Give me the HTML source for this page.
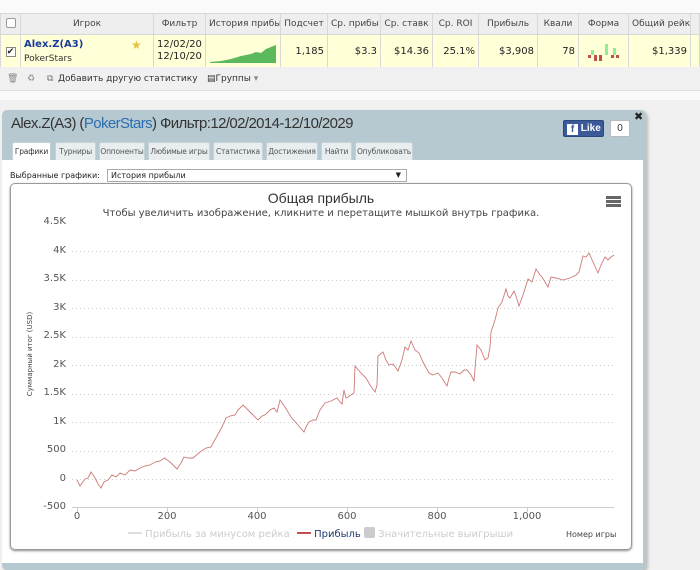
<!DOCTYPE html>
<html><head><meta charset="utf-8"><style>
*{box-sizing:border-box;margin:0;padding:0}
body{width:700px;height:563px;background:#f1f1f1;font-family:"Liberation Sans","DejaVu Sans",sans-serif;position:relative;overflow:hidden;font-size:10px;color:#333}
.a{position:absolute}
table{border-collapse:collapse;position:absolute;left:0;top:13px;width:700px;font-family:"DejaVu Sans",sans-serif;font-size:9px;table-layout:fixed}
td{border:1px solid #d8d8d8;white-space:nowrap;overflow:hidden;padding:0 3px}
tr.h td{background:#eeeeee;height:21px;text-align:center;color:#444}
tr.d td{background:#ffffd8;height:32px;text-align:right;color:#222;font-size:10px}
.tab{position:absolute;top:142px;height:18px;background:#e8eef0;border:1px solid #c5d2d8;border-bottom:none;font-size:7.5px;color:#555;text-align:center;line-height:17px;font-family:"DejaVu Sans",sans-serif;border-radius:2px 2px 0 0;white-space:nowrap;overflow:hidden;letter-spacing:-0.2px}
.yl{position:absolute;left:30px;width:36px;text-align:right;font-size:10px;color:#555;font-family:"DejaVu Sans",sans-serif}
.xl{position:absolute;top:511px;font-size:10px;color:#555;font-family:"DejaVu Sans",sans-serif;width:40px;text-align:center}
</style></head><body>
<div class="a" style="left:0;top:0;width:700px;height:100px;background:#fafafa"></div>
<table>
<tr class="h"><td style="width:20px"><span style="display:inline-block;width:10px;height:10px;border:1px solid #999;background:#fff;border-radius:2px"></span></td><td style="width:133px">Игрок</td><td style="width:52px">Фильтр</td><td style="width:75px">История прибы</td><td style="width:47px">Подсчет</td><td style="width:53px">Ср. прибы</td><td style="width:52px">Ср. ставк</td><td style="width:46px">Ср. ROI</td><td style="width:59px">Прибыль</td><td style="width:41px">Квали</td><td style="width:50px">Форма</td><td style="width:62px">Общий рейк</td><td></td></tr>
<tr class="d"><td style="text-align:center"><span style="display:inline-block;width:10px;height:10px;border:1px solid #888;background:#fff;font-size:9px;line-height:8px">✔</span></td>
<td style="text-align:left;position:relative"><div style="color:#1a3c9a;font-weight:bold;font-size:10px">Alex.Z(A3)</div><div style="color:#333;font-size:9px;margin-top:4px">PokerStars</div><span class="a" style="left:110px;top:3px;color:#e8c040;font-size:12px">★</span></td>
<td style="text-align:left;font-size:10px;line-height:12px">12/02/20<br>12/10/20</td>
<td style="padding:0;position:relative"><svg width="75" height="32" style="display:block"><path d="M4 27 L15 26 L25 24 L35 21 L45 19 L50 17 L55 18 L60 14 L65 12 L70 10 L70 28 L4 28Z" fill="#5cb85c"/></svg></td>
<td>1,185</td><td>$3.3</td><td>$14.36</td><td>25.1%</td><td>$3,908</td><td>78</td>
<td style="padding:0"><svg width="50" height="32" style="display:block"><g fill="#c0504d"><rect x="9" y="20" width="3" height="3"/><rect x="15" y="20" width="3" height="6"/><rect x="20" y="20" width="3" height="6"/><rect x="32" y="20" width="3" height="3"/><rect x="37" y="20" width="3" height="3"/></g><g fill="#90ee90"><rect x="12" y="15" width="3" height="5"/><rect x="26" y="9" width="3" height="11"/><rect x="34" y="13" width="3" height="7"/></g></svg></td>
<td>$1,339</td><td></td></tr>
</table>
<div class="a" style="left:0;top:67px;width:700px;height:24px;background:#f0f0f0;border-bottom:1px solid #ddd;font-family:'DejaVu Sans',sans-serif;font-size:9px;color:#333;line-height:24px">
<span class="a" style="left:7px;color:#888">🗑</span><span class="a" style="left:27px;color:#999">♻</span><span class="a" style="left:47px;color:#777">⧉</span><span class="a" style="left:58px">Добавить другую статистику</span><span class="a" style="left:207px">▤Группы <span style="color:#888">▾</span></span></div>
<div class="a" style="left:2px;top:110px;width:644px;height:460px;background:#b7c9d0;border-radius:5px;box-shadow:2px 2px 3px #bbb"></div>
<div class="a" style="left:11px;top:115px;font-size:15px;color:#333;font-family:'Liberation Sans',sans-serif;letter-spacing:-0.6px">Alex.Z(A3) (<span style="color:#2a6db0">PokerStars</span>) Фильтр:12/02/2014-12/10/2029</div>
<div class="a" style="left:563px;top:120px;width:41px;height:17px;background:#3b5998;border:1px solid #29487d;border-radius:2px;color:#fff;font-weight:bold;font-size:10px;line-height:15px;padding-left:3px"><span style="display:inline-block;width:11px;height:11px;background:#fff;color:#3b5998;text-align:center;line-height:12px;font-size:10px;vertical-align:-1px">f</span> Like</div>
<div class="a" style="left:610px;top:120px;width:20px;height:17px;background:#fff;border:1px solid #bbb;border-radius:2px;font-size:10px;text-align:center;line-height:15px;color:#333">0</div>
<div class="a" style="left:634px;top:110px;font-size:11px;font-weight:bold;color:#222">✖</div>
<div class="tab" style="left:12px;width:39px;background:#fff;height:19px;color:#333">Графики</div>
<div class="tab" style="left:55px;width:41px">Турниры</div>
<div class="tab" style="left:99px;width:46px">Оппоненты</div>
<div class="tab" style="left:148px;width:62px">Любимые игры</div>
<div class="tab" style="left:213px;width:50px">Статистика</div>
<div class="tab" style="left:266px;width:52px">Достижения</div>
<div class="tab" style="left:321px;width:31px">Найти</div>
<div class="tab" style="left:355px;width:58px">Опубликовать</div>
<div class="a" style="left:2px;top:160px;width:641px;height:403px;background:#fff"></div>
<div class="a" style="left:10px;top:171px;font-size:8px;font-family:'DejaVu Sans',sans-serif;color:#222">Выбранные графики:</div>
<div class="a" style="left:107px;top:169px;width:300px;height:13px;border:1px solid #aaa;font-size:8px;font-family:'DejaVu Sans',sans-serif;padding-left:3px;line-height:11px;color:#222">История прибыли<span class="a" style="right:5px;top:0;font-size:7px">▼</span></div>
<div class="a" style="left:10px;top:183px;width:622px;height:367px;border:1px solid #999;border-radius:5px;box-shadow:0 1px 2px #888"></div>
<div class="a" style="left:10px;top:190px;width:622px;text-align:center;font-size:14px;color:#333">Общая прибыль</div>
<div class="a" style="left:10px;top:208px;width:622px;text-align:center;font-size:10px;color:#444;font-family:'DejaVu Sans',sans-serif">Чтобы увеличить изображение, кликните и перетащите мышкой внутрь графика.</div>
<div class="a" style="left:606px;top:196px;width:15px;height:3px;background:#666;box-shadow:0 4px 0 #666,0 8px 0 #666"></div>
<div class="a" style="left:-20px;top:350px;width:100px;transform:rotate(-90deg);font-size:7px;color:#444;text-align:center;font-family:'DejaVu Sans',sans-serif">Суммарный итог (USD)</div>
<div class="yl" style="top:216px">4.5K</div><div class="yl" style="top:245px">4K</div><div class="yl" style="top:273px">3.5K</div><div class="yl" style="top:302px">3K</div><div class="yl" style="top:330px">2.5K</div><div class="yl" style="top:359px">2K</div><div class="yl" style="top:387px">1.5K</div><div class="yl" style="top:416px">1K</div><div class="yl" style="top:444px">500</div><div class="yl" style="top:473px">0</div><div class="yl" style="top:501px">-500</div>
<svg class="a" style="left:0;top:0" width="700" height="563">
<g stroke="#ccc" stroke-dasharray="1,3" stroke-width="1">
<line x1="72" y1="251.5" x2="614" y2="251.5"/><line x1="72" y1="280.5" x2="614" y2="280.5"/><line x1="72" y1="308.5" x2="614" y2="308.5"/><line x1="72" y1="337.5" x2="614" y2="337.5"/><line x1="72" y1="365.5" x2="614" y2="365.5"/><line x1="72" y1="394.5" x2="614" y2="394.5"/><line x1="72" y1="422.5" x2="614" y2="422.5"/><line x1="72" y1="451.5" x2="614" y2="451.5"/><line x1="72" y1="479.5" x2="614" y2="479.5"/></g>
<line x1="72" y1="507.5" x2="614" y2="507.5" stroke="#ccc"/>
<g stroke="#ccc"><line x1="77.5" y1="507" x2="77.5" y2="512"/><line x1="167.5" y1="507" x2="167.5" y2="512"/><line x1="257.5" y1="507" x2="257.5" y2="512"/><line x1="347.5" y1="507" x2="347.5" y2="512"/><line x1="437.5" y1="507" x2="437.5" y2="512"/><line x1="527.5" y1="507" x2="527.5" y2="512"/></g>
<polyline fill="none" stroke="#cd7a77" stroke-width="0.9" points="77,480 80,486 82,483 85,479 88,478 91,472 95,478 98,484 101,488 104,482 108,480 112,475 116,477 120,473 125,475 130,470 135,471 140,468 145,466 150,465 155,462 160,461 164.5,458 170,462 177,469 181,463 184,457 188,458 193,458 200,452 206,448 211,447 217,436 222,427 226,418 230,416 235,415 238,410 243,405 248,410 253,415 258,420 262,416 265,415 270,410 274,408 277,412 280,400 285,407 291,417 298,425 304,432 307,425 309,422 313,420 316,420 320,410 325,403 331,401 337,398 340,402 342,404 344,390 346,398 348,397 351,395 354,393 355,366 360,372 366,378 370,385 375,392 377,385 378,356 383,352 386,360 389,365 393,364 396,368 398,371 402,360 405,347 408,350 411,341 415,350 419,353 423,362 429,373 433,375 438,373 442,378 447,386 449,378 451,372 455,372 460,374 464,370 467,370 471,375 474,381 477,345 481,350 485,360 488,358 490,347 491,332 495,320 498,308 502,302 506,289 508,296 510,298 514,291 516,296 519,306 523,295 528,279 532,282 536,269 540,275 542,277 545,282 548,287 551,277 556,278 563,280 570,278 576,275 579,272 583,256 586,257 589,253 593,262 598,273 601,265 605,257 608,260 611,257 614,255"/>
</svg>
<div class="xl" style="left:57px">0</div><div class="xl" style="left:147px">200</div><div class="xl" style="left:237px">400</div><div class="xl" style="left:327px">600</div><div class="xl" style="left:417px">800</div><div class="xl" style="left:507px">1,000</div>
<div class="a" style="left:128px;top:527px;font-size:10px;font-family:'DejaVu Sans',sans-serif;color:#ccc;white-space:nowrap"><span style="display:inline-block;width:14px;height:2px;background:#ddd;vertical-align:3px"></span> Прибыль за минусом рейка <span style="display:inline-block;width:14px;height:2px;background:#c0504d;vertical-align:3px;margin-left:4px"></span> <span style="color:#1f3a6e">Прибыль</span> <span style="display:inline-block;width:11px;height:11px;background:#ccc;vertical-align:-1px;border-radius:2px"></span> Значительные выигрыши</div>
<div class="a" style="left:566px;top:530px;font-size:8px;font-family:'DejaVu Sans',sans-serif;color:#444">Номер игры</div>
</body></html>
